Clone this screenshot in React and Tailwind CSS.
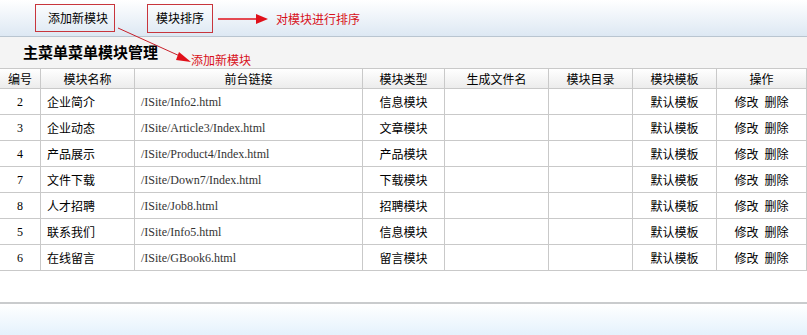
const rows = [
  { id: 2, name: '企业简介', link: '/ISite/Info2.html', type: '信息模块' },
  { id: 3, name: '企业动态', link: '/ISite/Article3/Index.html', type: '文章模块' },
  { id: 4, name: '产品展示', link: '/ISite/Product4/Index.html', type: '产品模块' },
  { id: 7, name: '文件下载', link: '/ISite/Down7/Index.html', type: '下载模块' },
  { id: 8, name: '人才招聘', link: '/ISite/Job8.html', type: '招聘模块' },
  { id: 5, name: '联系我们', link: '/ISite/Info5.html', type: '信息模块' },
  { id: 6, name: '在线留言', link: '/ISite/GBook6.html', type: '留言模块' },
];

const heads = ['编号', '模块名称', '前台链接', '模块类型', '生成文件名', '模块目录', '模块模板', '操作'];
const widths = [41, 94, 228, 82, 104, 84, 84, 90];

const cjk = "font-['SimSun','Noto_Sans_CJK_SC',sans-serif]";

const App = () => {
  return (
    <div className={`relative w-[807px] h-[335px] overflow-hidden bg-white text-[12px] text-black ${cjk}`}>
      {/* top toolbar */}
      <div className="h-[37px] flex items-center bg-gradient-to-b from-white to-[#dde8f3] border-b border-[#b9c5d0]">
        <div className="ml-[35px] h-[28px] w-[80px] border border-[#c8353c] flex items-center pl-[12px]">添加新模块</div>
        <div className="ml-[32px] h-[29px] w-[66px] border border-[#c8353c] flex items-center justify-center">模块排序</div>
        <svg width="52" height="12" viewBox="0 0 52 12" className="ml-[5px] mt-[2px]">
          <line x1="0" y1="6" x2="40" y2="6" stroke="#e0101a" strokeWidth="1.5" />
          <polygon points="38,1 50,6 38,11" fill="#e0101a" />
        </svg>
        <span className="ml-[6px] mt-[2px] text-[#d8101a]">对模块进行排序</span>
      </div>

      {/* title */}
      <div className="h-[31px] bg-[#f4f4f4] flex items-center pl-[23px]">
        <span className="text-[15px] font-bold">主菜单菜单模块管理</span>
      </div>

      {/* diagonal arrow + note */}
      <svg className="absolute left-0 top-0" width="200" height="70" viewBox="0 0 200 70">
        <line x1="118" y1="28" x2="182" y2="57" stroke="#c8202a" strokeWidth="1" />
        <polygon points="179,52 191,62 176,60" fill="#e0101a" />
      </svg>
      <span className="absolute left-[191px] top-[53px] text-[#d8101a] leading-[14px]">添加新模块</span>

      {/* table */}
      <table className="table-fixed border-collapse w-[808px] -ml-px">
        <colgroup>
          {widths.map((w, i) => (
            <col key={i} style={{ width: w }} />
          ))}
        </colgroup>
        <thead>
          <tr className="h-[20px] bg-gradient-to-b from-white to-[#ebebeb]">
            {heads.map((h) => (
              <th key={h} className="border border-[#c9c9c9] font-normal text-center leading-[18px] p-0">{h}</th>
            ))}
          </tr>
        </thead>
        <tbody>
          {rows.map((r) => (
            <tr key={r.id} className="h-[26px]">
              <td className="border border-[#c9c9c9] text-center font-['Liberation_Serif',serif] p-0">{r.id}</td>
              <td className="border border-[#c9c9c9] pl-[6px] p-0">{r.name}</td>
              <td className="border border-[#c9c9c9] pl-[6px] p-0 font-['Liberation_Serif',serif] text-[#333]">{r.link}</td>
              <td className="border border-[#c9c9c9] text-center p-0">{r.type}</td>
              <td className="border border-[#c9c9c9] p-0"></td>
              <td className="border border-[#c9c9c9] p-0"></td>
              <td className="border border-[#c9c9c9] text-center p-0">默认模板</td>
              <td className="border border-[#c9c9c9] text-center p-0">
                <span>修改</span>
                <span className="ml-[6px]">删除</span>
              </td>
            </tr>
          ))}
        </tbody>
      </table>

      {/* footer */}
      <div className="h-[31px]" />
      <div className="h-[2px] bg-[#c9cbcd]" />
      <div className="h-[33px] bg-gradient-to-b from-white to-[#e3f1fc]" />
    </div>
  );
};

export default App;
